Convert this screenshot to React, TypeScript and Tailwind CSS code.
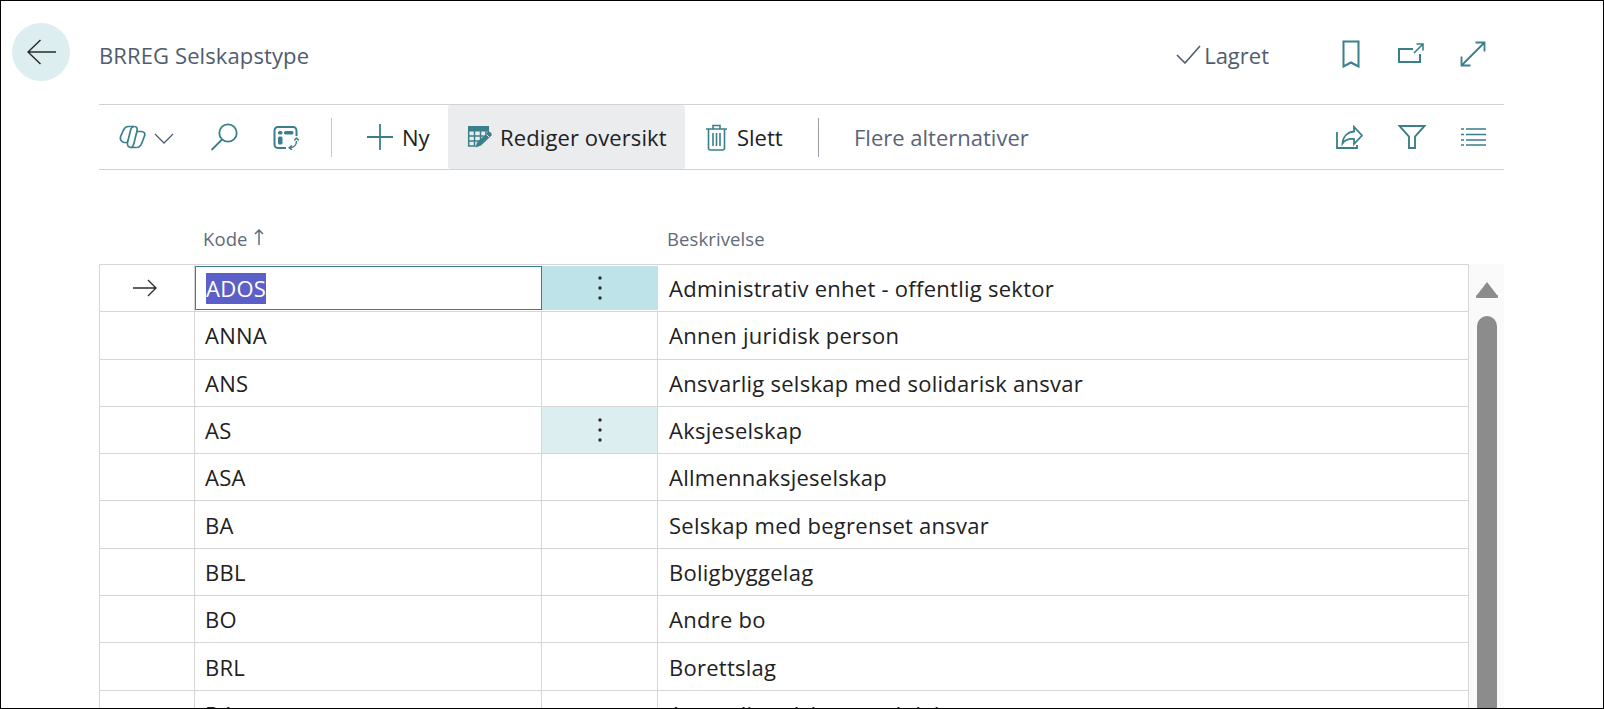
const rows: [string, string][] = [
  ['ADOS', 'Administrativ enhet - offentlig sektor'],
  ['ANNA', 'Annen juridisk person'],
  ['ANS', 'Ansvarlig selskap med solidarisk ansvar'],
  ['AS', 'Aksjeselskap'],
  ['ASA', 'Allmennaksjeselskap'],
  ['BA', 'Selskap med begrenset ansvar'],
  ['BBL', 'Boligbyggelag'],
  ['BO', 'Andre bo'],
  ['BRL', 'Borettslag'],
  ['DA', 'Ansvarlig selskap med delt ansvar'],
];

const teal = '#3a7f8b';

function Kebab() {
  return (
    <svg width="4" height="26" viewBox="0 0 4 26" fill="#2b2b2b">
      <circle cx="2" cy="3" r="1.7" />
      <circle cx="2" cy="13" r="1.7" />
      <circle cx="2" cy="23" r="1.7" />
    </svg>
  );
}

function Copilot() {
  return (
    <svg width="27" height="24" viewBox="0 0 27 24" fill="none" stroke={teal} strokeWidth="1.7">
      <path d="M15 1.500H9C6.500 1.500 5.500 3 4.500 5L1.800 11c-1.200 3 .2 6 3.200 6.500H9" />
      <path d="M15.500 1.500c-2.500 0-3.500 2-4 4l-3 12c-.5 2.500.5 5 3.500 5h5.500" />
      <path d="M15.500 1.500c2.500 0 3 2 2.500 4.500l-3 12c-.7 2.800-1.500 4.500-3 4.500" />
      <path d="M17.500 6.500h5c2.500 0 4 2 3 4.500l-2.700 7c-1 3-3 4.500-5.300 4.500" />
    </svg>
  );
}

function Search() {
  return (
    <svg width="28" height="28" viewBox="0 0 28 28" fill="none" stroke={teal} strokeWidth="1.8">
      <circle cx="18" cy="10" r="8.700" />
      <path d="M12 16.500 1.500 27" />
    </svg>
  );
}

function Layout() {
  return (
    <svg width="26" height="25" viewBox="0 0 26 25" fill="none" stroke={teal} strokeWidth="2">
      <path d="M13 23H5a3.500 3.500 0 0 1-3.500-3.500v-14A3.500 3.500 0 0 1 5 2h15a3.500 3.500 0 0 1 3.500 3.500V11" />
      <rect x="5" y="6" width="4.500" height="3.500" rx="1.500" fill={teal} stroke="none" />
      <rect x="11" y="6" width="9.500" height="3.500" rx="1.500" fill={teal} stroke="none" />
      <rect x="5" y="11.500" width="4.500" height="8" rx="1.500" fill={teal} stroke="none" />
      <path d="M16.500 22.800c3.500 0 7-2 7-6.800" strokeWidth="1.500" />
      <path d="M21.200 15.500l2.300-2.500 2.300 2.500M19 20.500l-2.800 2.300 2.800 2" strokeWidth="1.500" />
    </svg>
  );
}

function Plus() {
  return (
    <svg width="26" height="26" viewBox="0 0 26 26" stroke={teal} strokeWidth="1.800">
      <path d="M13 0v26M0 13h26" />
    </svg>
  );
}

function TableEdit() {
  return (
    <svg width="27" height="26" viewBox="0 0 27 26" fill="none">
      <rect x="1" y="2" width="21" height="5.500" fill={teal} />
      <path d="M1.700 7v15h7M1.700 12h15M1.700 17h11M7.500 7v15M13.500 7v10M19 7v5M21.300 2v7" stroke={teal} strokeWidth="1.500" />
      <path d="M8.500 23.500l1.500-5L21 8c1.500-1 4.500 1.500 3.500 3.500L14 21.500z" fill={teal} />
      <path d="M19.500 10.500l2.500 2.500" stroke="#ebecee" strokeWidth="1" />
    </svg>
  );
}

function Trash() {
  return (
    <svg width="21" height="27" viewBox="0 0 21 27" fill="none" stroke={teal} strokeWidth="1.600">
      <path d="M0 5h21M7 5V1.500h7V5" />
      <path d="M2.500 5v19a2 2 0 0 0 2 2h12a2 2 0 0 0 2-2V5" />
      <path d="M7 9v13M10.500 9v13M14 9v13" />
    </svg>
  );
}

function Check() {
  return (
    <svg width="25" height="19" viewBox="0 0 25 19" fill="none" stroke="#505c6d" strokeWidth="1.600">
      <path d="M1 10l8 8L24 1" />
    </svg>
  );
}

function Bookmark() {
  return (
    <svg width="18" height="28" viewBox="0 0 18 28" fill="none" stroke={teal} strokeWidth="2">
      <path d="M1.500 26.500V1.500h15v25L9 22.500z" />
    </svg>
  );
}

function OpenNew() {
  return (
    <svg width="26" height="20" viewBox="0 0 26 20" fill="none" stroke={teal} strokeWidth="2">
      <path d="M15 6H1v13h21v-8" />
      <path d="M16 10 24.500 1.500M18.500 1h6.500v6.500" strokeWidth="1.600" />
    </svg>
  );
}

function Expand() {
  return (
    <svg width="26" height="26" viewBox="0 0 26 26" fill="none" stroke={teal} strokeWidth="1.800">
      <path d="M2 24 24 2M15.500 1.500h9v9M1.500 15.500v9h9" />
    </svg>
  );
}

function Share() {
  return (
    <svg width="27" height="25" viewBox="0 0 27 25" fill="none" stroke={teal} strokeWidth="1.800">
      <path d="M1 7v16h20v-3" />
      <path d="M18 1.800l8 8.700-8 8.500v-5c-5-.5-9 1-11.500 4.500C7 11 12 7 18 6.500z" />
    </svg>
  );
}

function Filter() {
  return (
    <svg width="28" height="24" viewBox="0 0 28 24" fill="none" stroke={teal} strokeWidth="1.900">
      <path d="M1.500 1h25L17 11.500V23h-6V11.500z" />
    </svg>
  );
}

function ListIcon() {
  return (
    <svg width="25" height="18" viewBox="0 0 25 18" stroke={teal} strokeWidth="1.500">
      <path d="M0 1h3M5 1h20M0 6.500h3M5 6.500h20M0 12h3M5 12h20M0 17h3M5 17h20" />
    </svg>
  );
}

export default function App() {
  return (
    <div className="w-[1604px] h-[709px] overflow-hidden bg-white border border-black text-[#212121] font-['Open_Sans',sans-serif] flex flex-col">
      {/* page header */}
      <div className="flex items-start h-[103px] shrink-0">
        <button className="mt-[22px] ml-[11px] w-[58px] h-[58px] rounded-full bg-[#ddeef0] flex items-center justify-center">
          <svg width="29" height="26" viewBox="0 0 29 26" fill="none" stroke="#2b2b2b" strokeWidth="1.500">
            <path d="M29 13H1M13.500 1 1 13l12.500 12" />
          </svg>
        </button>
        <div className="ml-[29px] mt-[39px] text-[22px] leading-[30px] tracking-[0.005em] text-[#505c6d]">BRREG Selskapstype</div>
        <div className="ml-auto mr-[117px] mt-[24px] flex items-start">
          <div className="mt-[20px]"><Check /></div>
          <span className="ml-[3px] mt-[15px] text-[22px] leading-[30px] text-[#505c6d]">Lagret</span>
          <div className="ml-[73px] mt-[15px]"><Bookmark /></div>
          <div className="ml-[38px] mt-[18px]"><OpenNew /></div>
          <div className="ml-[36px] mt-[16px]"><Expand /></div>
        </div>
      </div>

      {/* action bar */}
      <div className="ml-[98px] w-[1405px] h-[66px] shrink-0 border-y border-[#d1d1d6] flex items-center text-[22px]">
        <div className="ml-[20px]"><Copilot /></div>
        <svg className="ml-[8px] mt-[3px]" width="20" height="11" viewBox="0 0 20 11" fill="none" stroke="#505c6d" strokeWidth="1.300">
          <path d="M1 1l9 9 9-9" />
        </svg>
        <div className="ml-[36px]"><Search /></div>
        <div className="ml-[35px]"><Layout /></div>
        <div className="ml-[32px] w-px h-[39px] bg-[#c8c8cc]" />
        <div className="ml-[35px]"><Plus /></div>
        <span className="ml-[9px] w-[46px] mt-[1px]">Ny</span>
        <div className="w-[237px] h-full bg-[#ebecee] rounded-[3px] flex items-center">
          <div className="ml-[19px]"><TableEdit /></div>
          <span className="ml-[6px] mt-[1px] tracking-[0.005em]">Rediger oversikt</span>
        </div>
        <div className="ml-[21px]"><Trash /></div>
        <span className="ml-[10px] w-[81px] mt-[1px]">Slett</span>
        <div className="w-px h-[39px] bg-[#9a9ea6]" />
        <span className="ml-[35px] mt-[1px] text-[#5a6478]">Flere alternativer</span>
        <div className="ml-auto"><Share /></div>
        <div className="ml-[35px]"><Filter /></div>
        <div className="ml-[35px] mr-[18px]"><ListIcon /></div>
      </div>

      {/* column headers */}
      <div className="ml-[98px] h-[94px] shrink-0 flex text-[18.500px] tracking-[0.005em] text-[#616b7a] pt-[54px]">
        <div className="w-[95px]" />
        <div className="w-[464px] pl-[9px] leading-[30px] flex items-center h-[30px]">
          Kode
          <svg className="ml-[6px] mb-[5px]" width="10" height="16" viewBox="0 0 10 16" fill="none" stroke="#616b7a" strokeWidth="1.500">
            <path d="M5 16V1M1 5l4-4 4 4" />
          </svg>
        </div>
        <div className="pl-[9px] leading-[30px]">Beskrivelse</div>
      </div>

      {/* list */}
      <div className="ml-[98px] w-[1405px] flex flex-1 min-h-0 overflow-hidden">
        <div className="w-[1370px] border-t border-r border-l border-[#d6d6d9] shrink-0">
          {rows.map(([code, name], i) => (
            <div key={code} className="h-[47.300px] border-b border-[#d6d6d9] flex text-[22px] tracking-[0.012em]">
              <div className="w-[95px] border-r border-[#d6d6d9] flex items-center justify-center">
                {i === 0 && (
                  <svg className="ml-[-4px]" width="24" height="18" viewBox="0 0 24 18" fill="none" stroke="#2b2b2b" strokeWidth="1.300">
                    <path d="M0 9h23M15 1l8 8-8 8" />
                  </svg>
                )}
              </div>
              {i === 0 ? (
                <div className="w-[347px] my-[1px] border border-[#3a7f8b] flex items-center pl-[10px]">
                  <span className="bg-[#5b5fc7] text-white leading-[31px]">{code}</span>
                </div>
              ) : (
                <div className="w-[347px] border-r border-[#d6d6d9] flex items-center pl-[10px] pt-[1px]">{code}</div>
              )}
              <div className={`w-[116px] border-r border-[#d6d6d9] flex items-center justify-center ${i === 0 ? 'my-[1px] bg-[#bee4ea]' : i === 3 ? 'bg-[#ddeef0]' : ''}`}>
                {(i === 0 || i === 3) && <Kebab />}
              </div>
              <div className="flex-1 flex items-center pl-[11px] pt-[1px]">{name}</div>
            </div>
          ))}
        </div>

        {/* scrollbar */}
        <div className="flex-1 bg-[#fafafa] flex flex-col items-center">
          <svg className="mt-[17px]" width="22" height="17" viewBox="0 0 22 17" fill="#8c8c8c">
            <path d="M11 1 21 14a1.500 1.500 0 0 1-1 3H2a1.500 1.500 0 0 1-1-3z" />
          </svg>
          <div className="mt-[18px] w-[20px] flex-1 rounded-t-[10px] bg-[#8c8c8c]" />
        </div>
      </div>
    </div>
  );
}
